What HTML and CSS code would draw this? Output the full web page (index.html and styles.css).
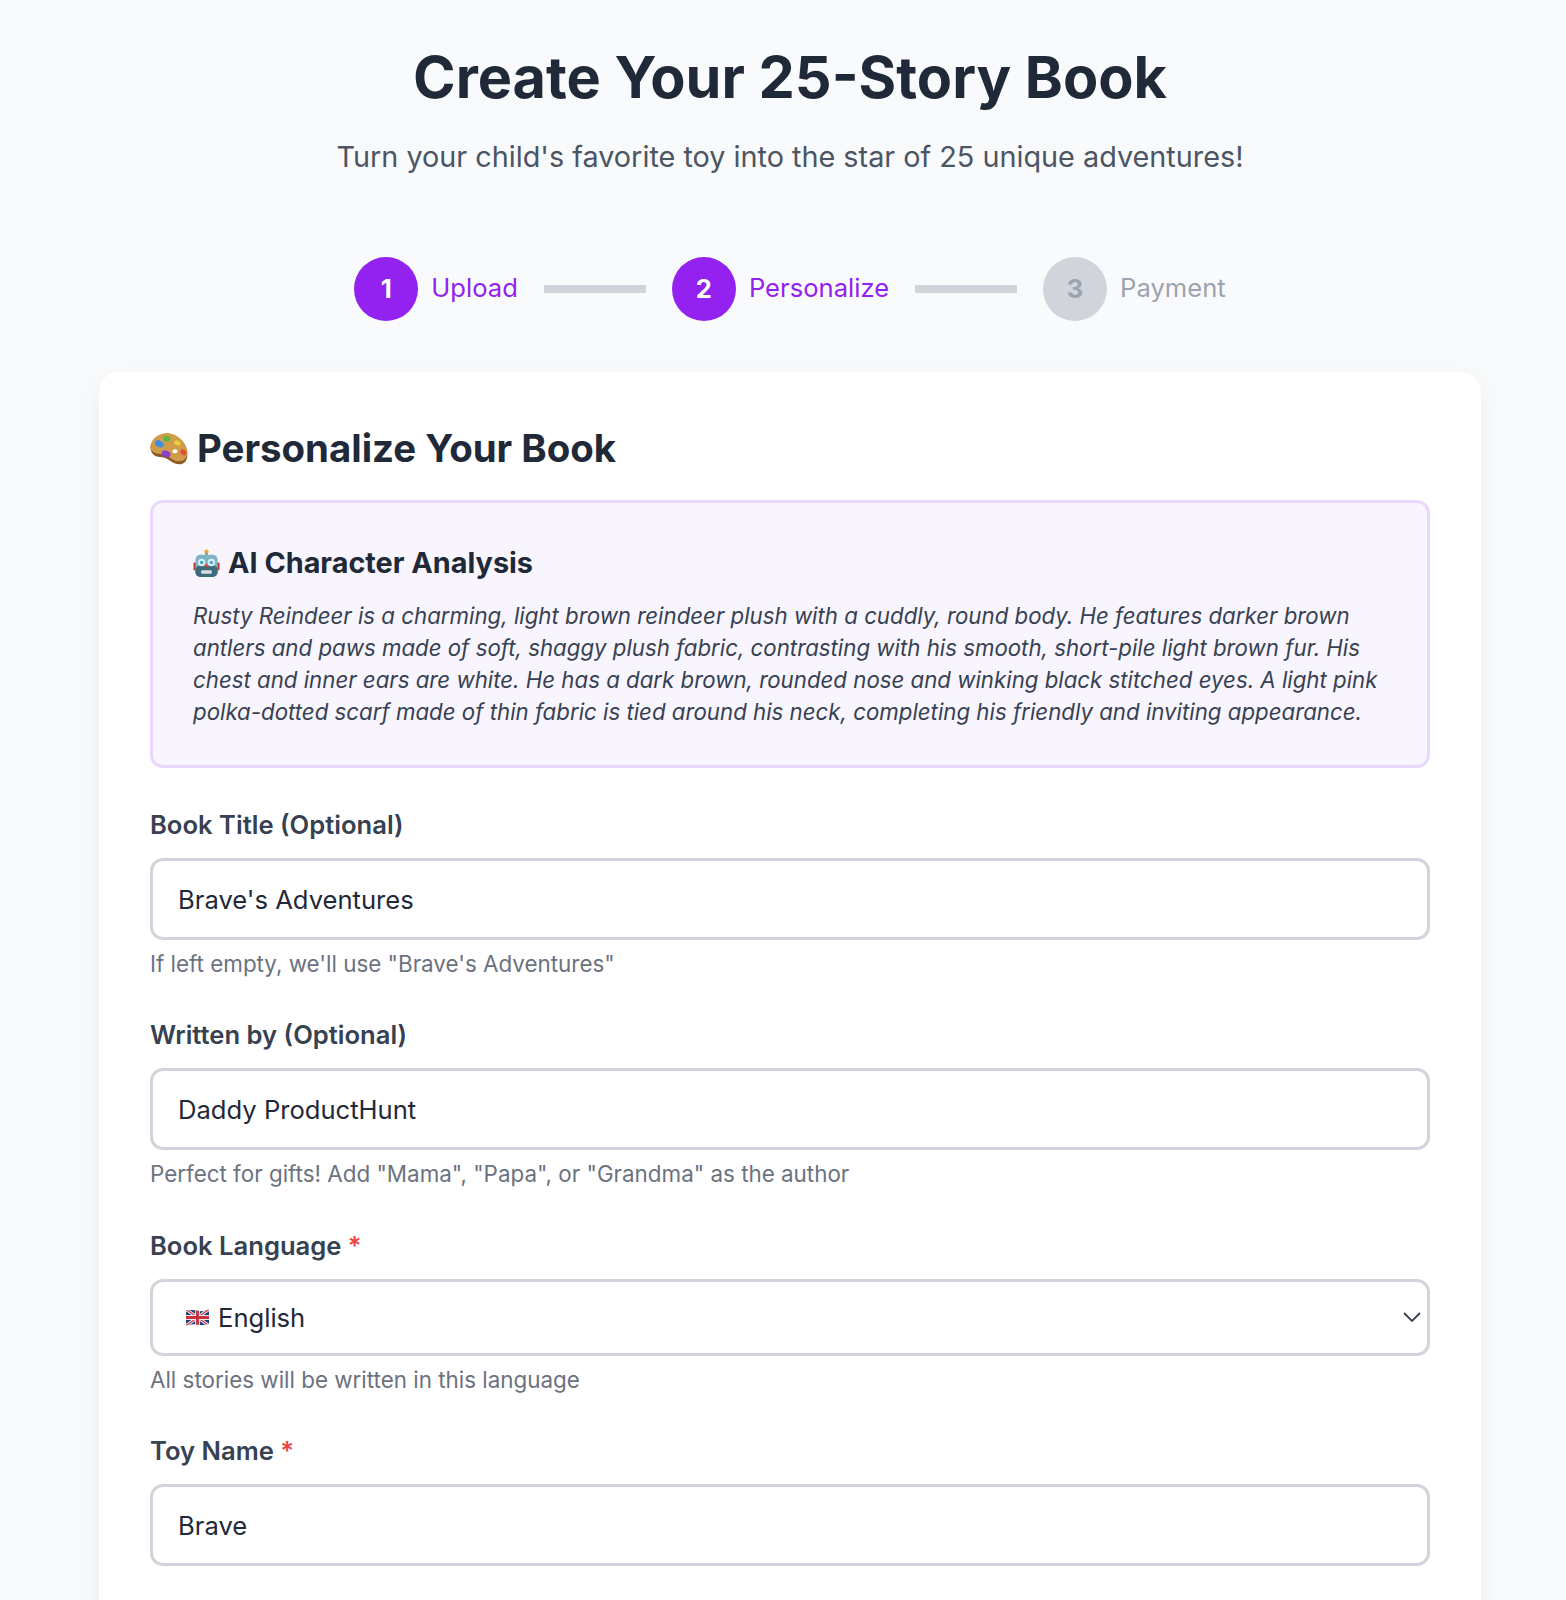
FILE: index.html
```html
<!DOCTYPE html>
<html lang="en">
<head>
    <meta charset="UTF-8">
    <meta name="viewport" content="width=device-width, initial-scale=1.0">
    <title>Create Your 25-Story Book</title>
    <link rel="stylesheet" href="styles.css">
</head>
<body>
    <div class="container">
        <header class="page-header">
            <h1>Create Your 25-Story Book</h1>
            <p class="subtitle">Turn your child's favorite toy into the star of 25 unique adventures!</p>
        </header>

        <div class="steps">
            <div class="step active"><span class="step-num">1</span><span class="step-label">Upload</span></div>
            <div class="step-line"></div>
            <div class="step active"><span class="step-num">2</span><span class="step-label">Personalize</span></div>
            <div class="step-line"></div>
            <div class="step"><span class="step-num">3</span><span class="step-label">Payment</span></div>
        </div>

        <main class="card">
            <h2 class="card-title">
                <svg class="emoji-palette" viewBox="0 0 38 32" aria-hidden="true">
                    <path d="M1 12C3 5 10 1 18 1c9 1 17 8 19 17 1 6 0 11-5 13-5 1-9-1-13-4-3-2-6-3-9-3C5 24-1 20 1 12z" fill="#8a5a22"/>
                    <path d="M1 11C3 4 10 0 18 0c9 1 17 8 19 16 1 6-1 11-6 12-5 1-8-1-12-4-3-2-6-3-9-3-6 0-12-4-9-10z" fill="#cf9c4a"/>
                    <ellipse cx="9.300" cy="10.700" rx="4.600" ry="3.200" transform="rotate(30 9.300 10.700)" fill="#3f8fe0"/>
                    <ellipse cx="16.700" cy="5.700" rx="3.600" ry="2.800" fill="#5ab947"/>
                    <ellipse cx="27.300" cy="10" rx="3.400" ry="2.400" transform="rotate(30 27.300 10)" fill="#e6cf3b"/>
                    <ellipse cx="16" cy="20.700" rx="4.600" ry="3.200" transform="rotate(20 16 20.700)" fill="#8a3fd0"/>
                    <ellipse cx="33.300" cy="19.300" rx="3.400" ry="2.600" transform="rotate(40 33.300 19.300)" fill="#e0503a"/>
                    <ellipse cx="25" cy="18.300" rx="2.600" ry="2" fill="#ffffff"/>
                </svg>
                Personalize Your Book
            </h2>

            <section class="analysis">
                <h3 class="analysis-title">
                    <svg class="emoji-robot" viewBox="0 0 28 30" aria-hidden="true">
                        <circle cx="14" cy="2.800" r="2.300" fill="#f2a93b"/>
                        <rect x="13" y="4" width="2" height="3" fill="#6b7f8c"/>
                        <rect x="0.500" y="14" width="3" height="8" rx="1" fill="#c0392b"/>
                        <rect x="24.500" y="14" width="3" height="8" rx="1" fill="#c0392b"/>
                        <rect x="2.500" y="6" width="23" height="23" rx="5" fill="#7fb4c4"/>
                        <rect x="2.500" y="17" width="23" height="12" rx="5" fill="#3b6b7d"/>
                        <circle cx="9" cy="14" r="3.800" fill="#d8f0f6"/>
                        <circle cx="19" cy="14" r="3.800" fill="#d8f0f6"/>
                        <circle cx="9" cy="14" r="1.800" fill="#4aa7c4"/>
                        <circle cx="19" cy="14" r="1.800" fill="#4aa7c4"/>
                        <path d="M14 14.500l2.400 4h-4.800z" fill="#d9483b"/>
                        <rect x="8.500" y="22" width="11" height="3.600" rx="1" fill="#d7dde0"/>
                    </svg>
                    AI Character Analysis
                </h3>
                <p class="analysis-text">Rusty Reindeer is a charming, light brown reindeer plush with a cuddly, round body. He features darker brown antlers and paws made of soft, shaggy plush fabric, contrasting with his smooth, short-pile light brown fur. His chest and inner ears are white. He has a dark brown, rounded nose and winking black stitched eyes. A light pink polka-dotted scarf made of thin fabric is tied around his neck, completing his friendly and inviting appearance.</p>
            </section>

            <div class="form-group">
                <label for="bookTitle">Book Title (Optional)</label>
                <input type="text" id="bookTitle" class="field" value="Brave's Adventures">
                <p class="hint">If left empty, we'll use "Brave's Adventures"</p>
            </div>

            <div class="form-group">
                <label for="writtenBy">Written by (Optional)</label>
                <input type="text" id="writtenBy" class="field" value="Daddy ProductHunt">
                <p class="hint">Perfect for gifts! Add "Mama", "Papa", or "Grandma" as the author</p>
            </div>

            <div class="form-group">
                <label>Book Language <span class="required">*</span></label>
                <div class="select-field">
                    <svg class="flag" viewBox="0 0 24 17" aria-hidden="true">
                        <clipPath id="flagWave">
                            <path d="M0 1.500C5 0 8 .5 12 1.500s8 .5 12-1.500v15c-4 1.500-8 2-12 1s-8-.5-12 1z"/>
                        </clipPath>
                        <g clip-path="url(#flagWave)">
                            <rect width="24" height="17" fill="#1f3a78"/>
                            <path d="M0 0l24 17M24 0L0 17" stroke="#e8e8ee" stroke-width="3.400"/>
                            <path d="M0 0l24 17M24 0L0 17" stroke="#c8303e" stroke-width="1.200"/>
                            <path d="M12 0v17M0 8.500h24" stroke="#e8e8ee" stroke-width="5"/>
                            <path d="M12 0v17M0 8.500h24" stroke="#c8303e" stroke-width="3"/>
                        </g>
                    </svg>
                    <span class="select-value">English</span>
                    <svg class="chevron" viewBox="0 0 18 10" aria-hidden="true">
                        <path d="M1 1l8 8 8-8" fill="none" stroke="#374151" stroke-width="1.800"/>
                    </svg>
                </div>
                <p class="hint">All stories will be written in this language</p>
            </div>

            <div class="form-group">
                <label for="toyName">Toy Name <span class="required">*</span></label>
                <input type="text" id="toyName" class="field" value="Brave">
            </div>
        </main>
    </div>
</body>
</html>
```

FILE: styles.css
```css
* {
    box-sizing: border-box;
}
html, body {
    height: 1600px;
    overflow: hidden;
}
body {
    margin: 0;
    background-color: #f9fafb;
    font-family: Inter, "Noto Sans", sans-serif;
    color: #1f2937;
}
.container {
    width: 1382px;
    margin: 0 0 0 99px;
    padding-top: 41px;
}
.page-header {
    text-align: center;
    margin-bottom: 80px;
}
h1 {
    margin: 0 0 24px;
    font-size: 57.6px;
    line-height: 72px;
    font-weight: 700;
    color: #1f2937;
}
.subtitle {
    margin: 0;
    font-size: 28.8px;
    line-height: 40px;
    color: #4b5563;
}
.steps {
    display: flex;
    justify-content: center;
    align-items: center;
    gap: 26px;
    margin-bottom: 51px;
}
.step {
    display: flex;
    align-items: center;
    gap: 13px;
    color: #9ca3af;
    font-size: 25.6px;
}
.step-num {
    width: 64px;
    height: 64px;
    padding-bottom: 2px;
    border-radius: 50%;
    display: flex;
    align-items: center;
    justify-content: center;
    background-color: #d1d5db;
    color: #9ca3af;
    font-weight: 700;
}
.step-label {
    padding-bottom: 3px;
}
.step.active {
    color: #9321f0;
}
.step.active .step-num {
    background-color: #9321f0;
    color: #fff;
}
.step-line {
    width: 102px;
    height: 8px;
    background-color: #d1d5db;
}
.card {
    background-color: #fff;
    border-radius: 20px;
    padding: 51px;
    box-shadow: 0 10px 30px rgba(0, 0, 0, 0.06);
    min-height: 1300px;
}
.card-title {
    display: flex;
    align-items: center;
    gap: 9px;
    margin: 0 0 27px;
    font-size: 38.4px;
    line-height: 50px;
    font-weight: 700;
}
.emoji-palette {
    width: 38px;
    height: 32px;
    margin-top: 2px;
}
.analysis {
    background-color: #f8f5ff;
    border: 3px solid #e9d8fd;
    border-radius: 13px;
    padding: 40px 40px 37px;
    margin-bottom: 41px;
}
.analysis-title {
    display: flex;
    align-items: center;
    gap: 8px;
    margin: 0 0 17px;
    font-size: 28.8px;
    line-height: 40px;
    font-weight: 700;
}
.emoji-robot {
    width: 27px;
    height: 29px;
}
.analysis-text {
    margin: 0;
    font-size: 22.25px;
    line-height: 32px;
    font-style: italic;
    color: #374151;
}
.form-group {
    margin-bottom: 41.4px;
}
label {
    display: block;
    margin-bottom: 17px;
    font-size: 25.6px;
    line-height: 32px;
    font-weight: 600;
    color: #374151;
}
.required {
    color: #ef4444;
}
.field, .select-field {
    display: block;
    width: 100%;
    height: 82px;
    padding: 0 25px;
    border: 3px solid #d1d5db;
    border-radius: 13px;
    background-color: #fff;
    font-family: inherit;
    font-size: 25.6px;
    color: #1f2937;
}
.select-field {
    display: flex;
    align-items: center;
    height: 77px;
    padding: 0 6px 0 33px;
}
.flag {
    width: 23px;
    height: 17px;
    margin-right: 9px;
}
.select-value {
    flex: 1;
}
.chevron {
    width: 18px;
    height: 10px;
}
.hint {
    margin: 10px 0 0;
    font-size: 22.4px;
    line-height: 28px;
    color: #6b7280;
}
```
